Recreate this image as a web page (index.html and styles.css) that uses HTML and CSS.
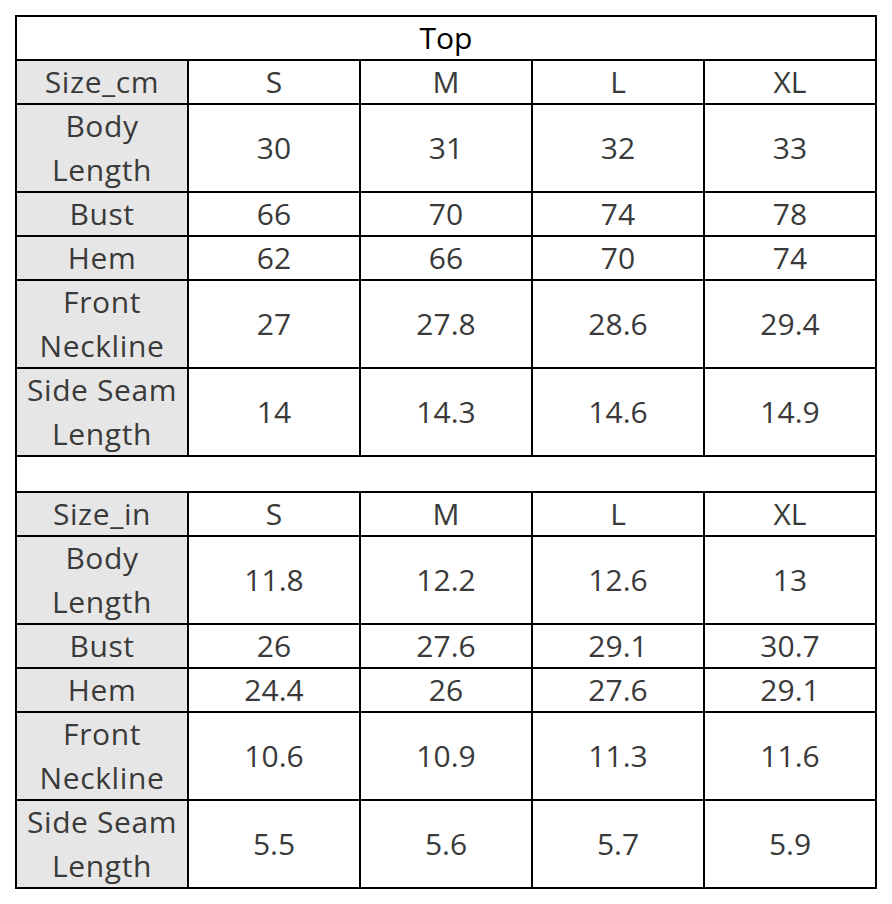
FILE: index.html
```html
<!DOCTYPE html>
<html>
<head>
<meta charset="utf-8">
<link rel="stylesheet" href="styles.css">
</head>
<body>
<div class="wrap">
  <div class="chart">
    <div class="cell title span">Top</div>

    <div class="cell head">Size_cm</div>
    <div class="cell">S</div><div class="cell">M</div><div class="cell">L</div><div class="cell">XL</div>

    <div class="cell head">Body<br>Length</div>
    <div class="cell">30</div><div class="cell">31</div><div class="cell">32</div><div class="cell">33</div>

    <div class="cell head">Bust</div>
    <div class="cell">66</div><div class="cell">70</div><div class="cell">74</div><div class="cell">78</div>

    <div class="cell head">Hem</div>
    <div class="cell">62</div><div class="cell">66</div><div class="cell">70</div><div class="cell">74</div>

    <div class="cell head">Front<br>Neckline</div>
    <div class="cell">27</div><div class="cell">27.8</div><div class="cell">28.6</div><div class="cell">29.4</div>

    <div class="cell head">Side Seam<br>Length</div>
    <div class="cell">14</div><div class="cell">14.3</div><div class="cell">14.6</div><div class="cell">14.9</div>

    <div class="cell span"></div>

    <div class="cell head">Size_in</div>
    <div class="cell">S</div><div class="cell">M</div><div class="cell">L</div><div class="cell">XL</div>

    <div class="cell head">Body<br>Length</div>
    <div class="cell">11.8</div><div class="cell">12.2</div><div class="cell">12.6</div><div class="cell">13</div>

    <div class="cell head">Bust</div>
    <div class="cell">26</div><div class="cell">27.6</div><div class="cell">29.1</div><div class="cell">30.7</div>

    <div class="cell head">Hem</div>
    <div class="cell">24.4</div><div class="cell">26</div><div class="cell">27.6</div><div class="cell">29.1</div>

    <div class="cell head">Front<br>Neckline</div>
    <div class="cell">10.6</div><div class="cell">10.9</div><div class="cell">11.3</div><div class="cell">11.6</div>

    <div class="cell head">Side Seam<br>Length</div>
    <div class="cell">5.5</div><div class="cell">5.6</div><div class="cell">5.7</div><div class="cell">5.9</div>
  </div>
</div>
</body>
</html>
```

FILE: styles.css
```css
html, body {
  margin: 0;
  padding: 0;
  background: #ffffff;
}

.wrap {
  padding: 15px;
}

.chart {
  display: grid;
  grid-template-columns: repeat(5, 170px);
  grid-template-rows: 42px 42px 86px 42px 42px 86px 86px 34px 42px 86px 42px 42px 86px 86px;
  gap: 2px;
  padding: 2px;
  background: #000000;
  width: max-content;
  font-family: "Open Sans", "Noto Sans", sans-serif;
  font-size: 30px;
  color: #3a3a3a;
}

.cell {
  background: #ffffff;
  display: flex;
  align-items: center;
  justify-content: center;
  text-align: center;
  line-height: 44px;
  white-space: nowrap;
}

.head {
  background: #e7e6e6;
  letter-spacing: 0.6px;
}

.span {
  grid-column: 1 / -1;
}

.title {
  color: #000000;
}
```
